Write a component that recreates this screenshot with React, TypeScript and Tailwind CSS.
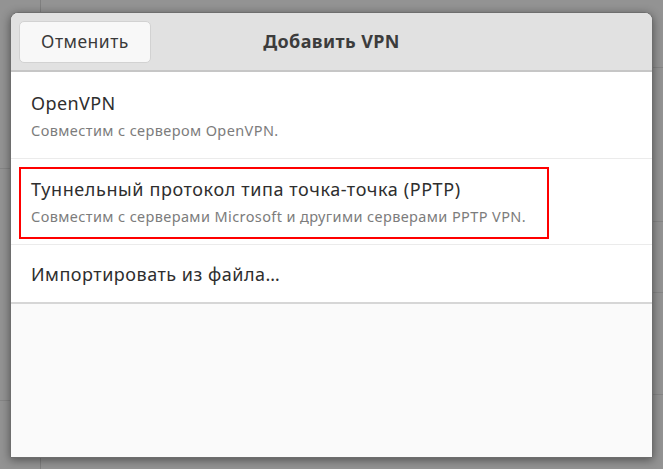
import React from "react";

export default function App() {
  const font = { fontFamily: '"Noto Sans", "Open Sans", sans-serif' };
  return (
    <div
      className="relative w-[663px] h-[469px] overflow-hidden bg-[#939393]"
      style={font}
    >
      {/* background app lines (behind the dialog) */}
      <div className="absolute left-[40px] top-0 h-full w-px bg-[#7f7f7f]" />
      <div className="absolute left-0 top-[168px] w-[12px] h-px bg-[#858585]" />
      <div className="absolute left-0 top-[400px] w-[12px] h-px bg-[#858585]" />
      <div className="absolute right-0 top-[67px] w-[12px] h-px bg-[#858585]" />
      <div className="absolute right-0 top-[221px] w-[12px] h-px bg-[#858585]" />
      <div className="absolute right-0 top-[292px] w-[12px] h-px bg-[#858585]" />
      <div className="absolute right-0 top-[394px] w-[12px] h-px bg-[#858585]" />

      <div className="relative ml-[10px] mt-[12px] w-[643px] h-[446px] flex flex-col rounded-t-[8px] bg-[#fafafa] border border-[#6e6e6e] shadow-[0_2px_10px_rgba(0,0,0,0.45)] overflow-hidden">
        {/* header */}
        <div className="relative h-[59px] shrink-0 flex items-center bg-[#e1e1e1] border-b-2 border-[#c6c6c6]">
          <button className="ml-[8px] w-[132px] h-[42px] rounded-[5px] bg-[#f8f8f8] border border-[#d2d2d2] text-[17.5px] tracking-[0.5px] text-[#3a3a3a] flex items-center justify-center">
            Отменить
          </button>
          <div className="absolute left-0 right-0 top-0 h-full flex items-center justify-center pointer-events-none">
            <span className="text-[18px] tracking-[0.4px] font-bold text-[#3c3c3c]">Добавить VPN</span>
          </div>
        </div>

        {/* list */}
        <div className="bg-white flex flex-col">
          <div className="pl-[20px] pt-[21px] pb-[19px] border-b border-[#ebebeb] flex flex-col gap-[8px]">
            <div className="text-[18px] tracking-[0.4px] leading-[20px] text-[#2e2e2e]">OpenVPN</div>
            <div className="text-[14.5px] tracking-[0.4px] leading-[18px] text-[#7c7c7c]">
              Совместим с сервером OpenVPN.
            </div>
          </div>
          <div className="pt-[8px] pb-[5px] pl-[8px] border-b border-[#ebebeb]">
            <div className="w-[530px] h-[72px] border-2 border-[#ff0000] pl-[10px] pt-[10px] flex flex-col gap-[8px]">
              <div className="text-[18px] tracking-[0.6px] leading-[20px] text-[#2e2e2e] whitespace-nowrap">
                Туннельный протокол типа точка-точка (PPTP)
              </div>
              <div className="text-[14.5px] tracking-[0.4px] leading-[18px] text-[#7c7c7c] whitespace-nowrap">
                Совместим с серверами Microsoft и другими серверами PPTP VPN.
              </div>
            </div>
          </div>
          <div className="h-[59px] pl-[20px] flex items-center border-b-2 border-[#d6d6d6]">
            <div className="text-[18px] tracking-[0.5px] leading-[20px] text-[#2e2e2e]">
              Импортировать из файла…
            </div>
          </div>
        </div>
        <div className="flex-1 bg-[#fafafa]" />
      </div>
    </div>
  );
}
